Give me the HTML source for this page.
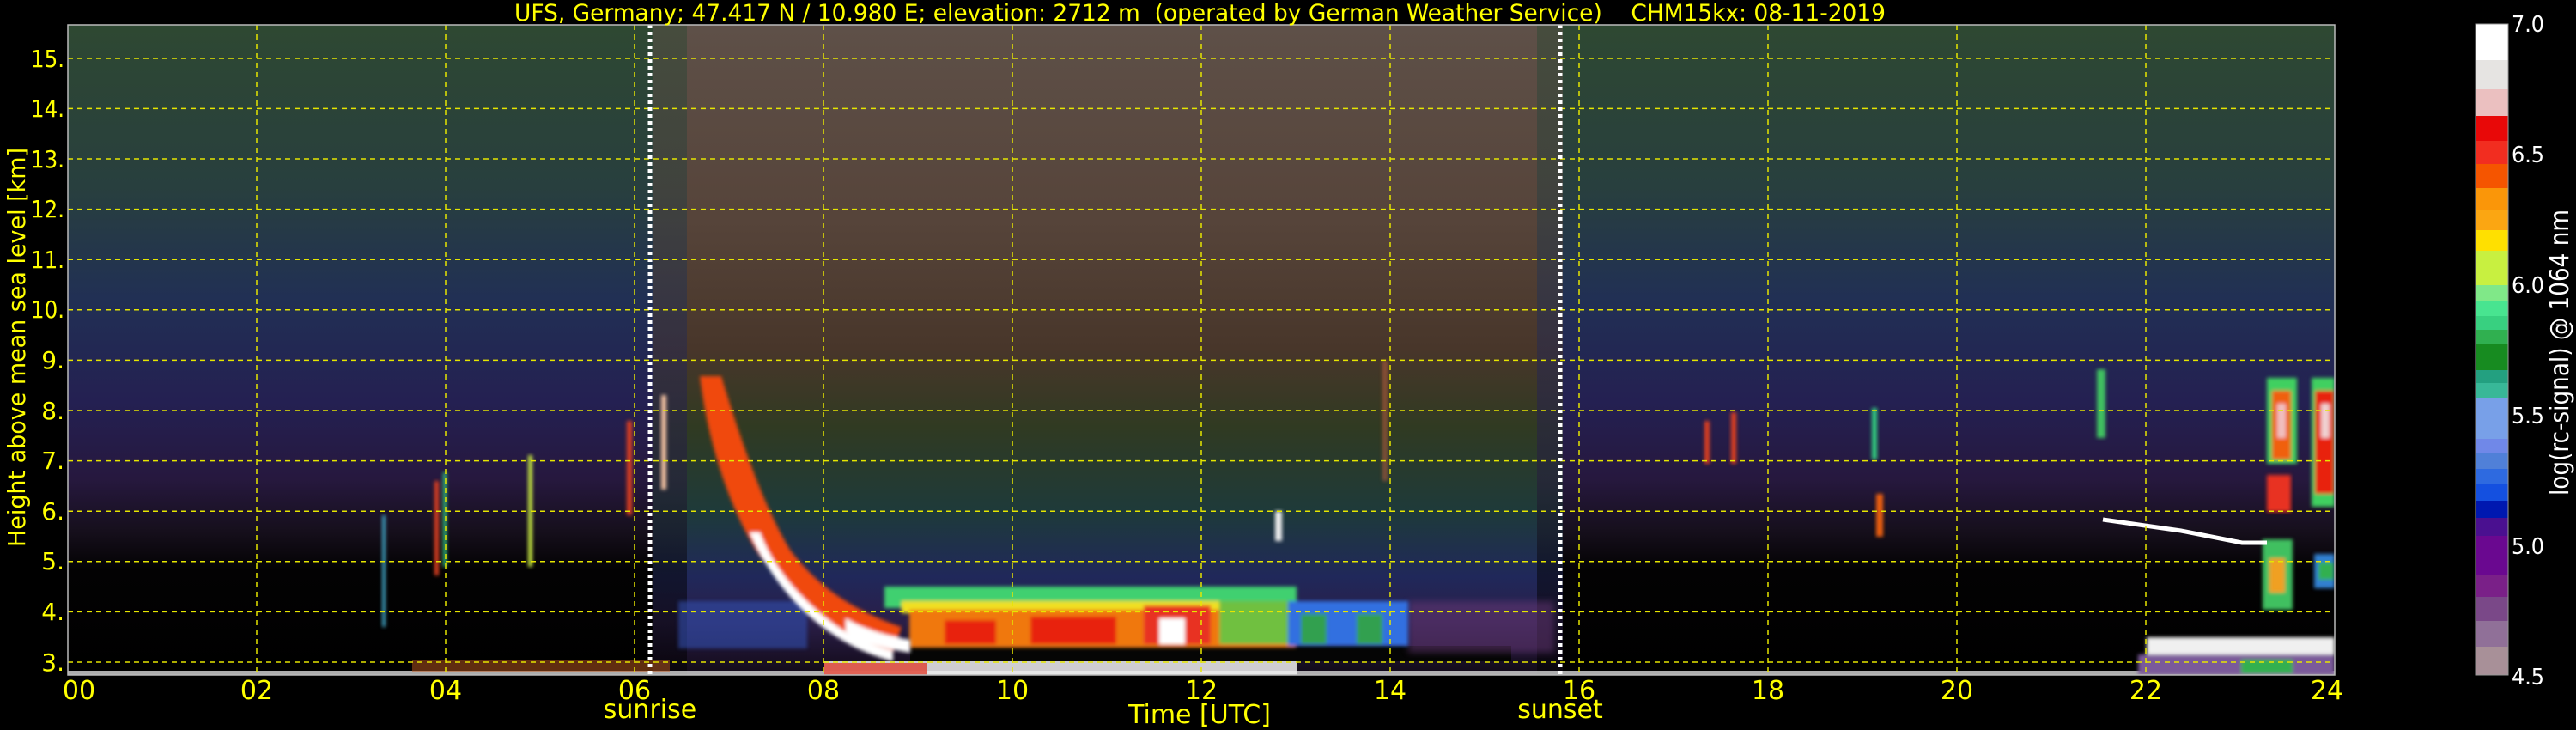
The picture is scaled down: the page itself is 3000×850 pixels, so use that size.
<!DOCTYPE html>
<html><head><meta charset="utf-8"><style>
html,body{margin:0;padding:0;background:#000;}
svg{display:block}
text{font-family:"DejaVu Sans","Liberation Sans",sans-serif;}
</style></head><body>
<svg width="3000" height="850" viewBox="0 0 3000 850" xmlns="http://www.w3.org/2000/svg">
<defs>
<linearGradient id="night" x1="0" y1="29" x2="0" y2="785" gradientUnits="userSpaceOnUse">
<stop offset="0" stop-color="#2e4832"/>
<stop offset="0.25" stop-color="#283f3e"/>
<stop offset="0.42" stop-color="#213054"/>
<stop offset="0.58" stop-color="#242052"/>
<stop offset="0.7" stop-color="#26183e"/>
<stop offset="0.78" stop-color="#160f1c"/>
<stop offset="0.84" stop-color="#030203"/>
<stop offset="1" stop-color="#000"/>
</linearGradient>
<linearGradient id="day" x1="0" y1="29" x2="0" y2="785" gradientUnits="userSpaceOnUse">
<stop offset="0" stop-color="#5e5048"/>
<stop offset="0.3" stop-color="#56443a"/>
<stop offset="0.5" stop-color="#48362a"/>
<stop offset="0.62" stop-color="#303a22"/>
<stop offset="0.75" stop-color="#1e3a3a"/>
<stop offset="0.85" stop-color="#20285a"/>
<stop offset="0.92" stop-color="#2a1e48"/>
<stop offset="1" stop-color="#120a18"/>
</linearGradient>
<filter id="blur"><feGaussianBlur stdDeviation="4"/></filter>
<filter id="blur2"><feGaussianBlur stdDeviation="2"/></filter>
<clipPath id="plot"><rect x="79" y="29" width="2640" height="757"/></clipPath>
</defs>

<g clip-path="url(#plot)">
<rect x="79" y="29" width="2640" height="757" fill="url(#night)"/>
<rect x="800" y="29" width="990" height="757" fill="url(#day)"/>
<rect x="760" y="29" width="40" height="757" fill="url(#day)" opacity="0.5"/>
<rect x="1790" y="29" width="30" height="757" fill="url(#day)" opacity="0.5"/>
<rect x="1060" y="752" width="700" height="18" fill="#050505"/>
<rect x="1640" y="700" width="170" height="60" fill="#6a3a7a" opacity="0.5" filter="url(#blur)"/>
<rect x="790" y="700" width="150" height="55" fill="#3050b0" opacity="0.6" filter="url(#blur2)"/>
<g filter="url(#blur2)">
<rect x="1030" y="683" width="480" height="25" fill="#40d070"/>
<rect x="1050" y="700" width="460" height="14" fill="#f0e020"/>
<rect x="1059" y="710" width="450" height="44" fill="#f07810"/>
<rect x="1100" y="722" width="60" height="28" fill="#e82010"/>
<rect x="1200" y="718" width="100" height="32" fill="#e82010"/>
<rect x="1332" y="705" width="78" height="45" fill="#e83020"/>
<rect x="1350" y="720" width="30" height="30" fill="#ffffff"/>
<rect x="1420" y="700" width="80" height="50" fill="#70c040"/>
<rect x="1500" y="700" width="140" height="52" fill="#3070e0"/>
<rect x="1515" y="715" width="30" height="35" fill="#30a050"/>
<rect x="1580" y="715" width="30" height="35" fill="#30a050"/>
</g>
<g filter="url(#blur2)">
<path d="M815,438 C825,520 850,590 880,640 C920,700 970,735 1040,760 L1050,730 C990,710 950,680 920,640 C890,590 865,520 840,438 Z" fill="#f04a10"/>
<path d="M873,620 C895,670 930,715 980,745 C1000,757 1020,765 1040,770 L1040,758 C1010,750 985,738 965,722 C930,695 900,660 885,620 Z" fill="#ffffff"/>
<path d="M985,720 C1000,730 1030,740 1060,745 L1060,760 C1030,755 1000,748 985,735Z" fill="#ffffff"/>
</g>
<rect x="79" y="781" width="2640" height="5" fill="#d8d8d8" opacity="0.8"/>
<rect x="960" y="770" width="550" height="16" fill="#f0f0f0" opacity="0.85"/>
<rect x="960" y="772" width="120" height="14" fill="#e04030" opacity="0.8"/>
<rect x="480" y="768" width="300" height="14" fill="#c05a20" opacity="0.5"/>
<g filter="url(#blur2)">
<rect x="506" y="560" width="5" height="110" fill="#e04020"/>
<rect x="516" y="550" width="4" height="110" fill="#30c080"/>
<rect x="615" y="530" width="5" height="130" fill="#c0e040"/>
<rect x="445" y="600" width="4" height="130" fill="#40a0c0"/>
<rect x="730" y="490" width="6" height="110" fill="#e04020"/>
<rect x="770" y="460" width="6" height="110" fill="#f0c0a0"/>
<rect x="1985" y="490" width="6" height="50" fill="#e04020"/>
<rect x="2016" y="480" width="6" height="60" fill="#e04020"/>
<rect x="2180" y="475" width="6" height="60" fill="#30d080"/>
<rect x="2185" y="575" width="8" height="50" fill="#f06010"/>
<rect x="2442" y="430" width="10" height="80" fill="#40c060"/>
<rect x="1485" y="595" width="8" height="35" fill="#f0f0f0"/>
<rect x="1610" y="420" width="6" height="140" fill="#c06040" opacity="0.6"/>
<rect x="2640" y="440" width="35" height="100" fill="#40d060"/>
<rect x="2646" y="455" width="22" height="80" fill="#f06010"/>
<rect x="2652" y="470" width="10" height="40" fill="#f0c0c0"/>
<rect x="2692" y="440" width="27" height="150" fill="#40d060"/>
<rect x="2696" y="455" width="22" height="120" fill="#e82010"/>
<rect x="2703" y="470" width="10" height="40" fill="#f0d0d0"/>
<rect x="2640" y="553" width="28" height="43" fill="#e83020"/>
<rect x="2635" y="628" width="35" height="82" fill="#40c060"/>
<rect x="2643" y="650" width="18" height="40" fill="#f0a020"/>
<rect x="2695" y="645" width="24" height="40" fill="#3080d0"/>
<rect x="2700" y="655" width="18" height="20" fill="#30b050"/>
</g>
<path d="M2449,605 L2540,618 L2611,632 L2640,632" stroke="#fff" stroke-width="5" fill="none"/>
<g filter="url(#blur2)">
<rect x="2500" y="742" width="219" height="30" fill="#f0f0f0"/>
<rect x="2490" y="762" width="229" height="24" fill="#7a5a9a"/>
<rect x="2610" y="768" width="60" height="16" fill="#30b050"/>
</g>
</g>

<g stroke="#e6e600" stroke-width="1.5" stroke-dasharray="6,5" fill="none">
<line x1="79" x2="2719" y1="68" y2="68"/><line x1="79" x2="2719" y1="126.4" y2="126.4"/>
<line x1="79" x2="2719" y1="185" y2="185"/><line x1="79" x2="2719" y1="243.6" y2="243.6"/>
<line x1="79" x2="2719" y1="302.2" y2="302.2"/><line x1="79" x2="2719" y1="360.8" y2="360.8"/>
<line x1="79" x2="2719" y1="419.4" y2="419.4"/><line x1="79" x2="2719" y1="478" y2="478"/>
<line x1="79" x2="2719" y1="536.6" y2="536.6"/><line x1="79" x2="2719" y1="595.2" y2="595.2"/>
<line x1="79" x2="2719" y1="653.8" y2="653.8"/><line x1="79" x2="2719" y1="712.4" y2="712.4"/>
<line x1="79" x2="2719" y1="771" y2="771"/>
<line x1="299" x2="299" y1="29" y2="786"/><line x1="519" x2="519" y1="29" y2="786"/>
<line x1="739" x2="739" y1="29" y2="786"/><line x1="959" x2="959" y1="29" y2="786"/>
<line x1="1179" x2="1179" y1="29" y2="786"/><line x1="1399" x2="1399" y1="29" y2="786"/>
<line x1="1619" x2="1619" y1="29" y2="786"/><line x1="1839" x2="1839" y1="29" y2="786"/>
<line x1="2059" x2="2059" y1="29" y2="786"/><line x1="2279" x2="2279" y1="29" y2="786"/>
<line x1="2499" x2="2499" y1="29" y2="786"/>
</g>
<g stroke="#fff" stroke-width="5" stroke-dasharray="4,4">
<line x1="757" x2="757" y1="29" y2="786"/><line x1="1817" x2="1817" y1="29" y2="786"/>
</g>
<rect x="79" y="29" width="2640" height="757" fill="none" stroke="#bbb" stroke-width="1.5"/>

<text x="599" y="24" fill="#ffff00" font-size="27" textLength="1597" lengthAdjust="spacingAndGlyphs" style="white-space:pre">UFS, Germany; 47.417 N / 10.980 E; elevation: 2712 m  (operated by German Weather Service)    CHM15kx: 08-11-2019</text>

<g fill="#ffff00" font-size="28" text-anchor="end">
<text x="75" y="78" textLength="39" lengthAdjust="spacingAndGlyphs">15.</text><text x="75" y="136" textLength="39" lengthAdjust="spacingAndGlyphs">14.</text><text x="75" y="195" textLength="39" lengthAdjust="spacingAndGlyphs">13.</text>
<text x="75" y="253" textLength="39" lengthAdjust="spacingAndGlyphs">12.</text><text x="75" y="312" textLength="39" lengthAdjust="spacingAndGlyphs">11.</text><text x="75" y="370" textLength="39" lengthAdjust="spacingAndGlyphs">10.</text>
<text x="75" y="429">9.</text><text x="75" y="488">8.</text><text x="75" y="546">7.</text>
<text x="75" y="605">6.</text><text x="75" y="663">5.</text><text x="75" y="722">4.</text>
<text x="75" y="781">3.</text>
</g>
<text transform="translate(29,637) rotate(-90)" fill="#ffff00" font-size="28" textLength="465" lengthAdjust="spacingAndGlyphs">Height above mean sea level [km]</text>

<g fill="#ffff00" font-size="30" text-anchor="middle">
<text x="92" y="814">00</text><text x="299" y="814">02</text><text x="519" y="814">04</text>
<text x="739" y="814">06</text><text x="959" y="814">08</text><text x="1179" y="814">10</text>
<text x="1399" y="814">12</text><text x="1619" y="814">14</text><text x="1839" y="814">16</text>
<text x="2059" y="814">18</text><text x="2279" y="814">20</text><text x="2499" y="814">22</text>
<text x="2710" y="814">24</text>
<text x="757" y="836">sunrise</text><text x="1817" y="836">sunset</text>
<text x="1397" y="842">Time [UTC]</text>
</g>

<g>
<rect x="2883" y="28" width="38" height="42" fill="#ffffff"/>
<rect x="2883" y="70" width="38" height="34" fill="#e6e4e2"/>
<rect x="2883" y="104" width="38" height="31" fill="#ebc0c0"/>
<rect x="2883" y="135" width="38" height="29" fill="#e80808"/>
<rect x="2883" y="164" width="38" height="27" fill="#f22d20"/>
<rect x="2883" y="191" width="38" height="28" fill="#f55500"/>
<rect x="2883" y="219" width="38" height="26" fill="#fa9609"/>
<rect x="2883" y="245" width="38" height="23" fill="#fba612"/>
<rect x="2883" y="268" width="38" height="24" fill="#ffe000"/>
<rect x="2883" y="292" width="38" height="40" fill="#c8f040"/>
<rect x="2883" y="332" width="38" height="18" fill="#80e888"/>
<rect x="2883" y="350" width="38" height="18" fill="#48e490"/>
<rect x="2883" y="368" width="38" height="16" fill="#38d080"/>
<rect x="2883" y="384" width="38" height="16" fill="#30b050"/>
<rect x="2883" y="400" width="38" height="31" fill="#178b20"/>
<rect x="2883" y="431" width="38" height="15" fill="#23a080"/>
<rect x="2883" y="446" width="38" height="17" fill="#38b898"/>
<rect x="2883" y="463" width="38" height="48" fill="#78a0e8"/>
<rect x="2883" y="511" width="38" height="17" fill="#7088e8"/>
<rect x="2883" y="528" width="38" height="18" fill="#5080d8"/>
<rect x="2883" y="546" width="38" height="17" fill="#2e6ae0"/>
<rect x="2883" y="563" width="38" height="20" fill="#1450e0"/>
<rect x="2883" y="583" width="38" height="20" fill="#0018b0"/>
<rect x="2883" y="603" width="38" height="21" fill="#4a1090"/>
<rect x="2883" y="624" width="38" height="46" fill="#6a0890"/>
<rect x="2883" y="670" width="38" height="25" fill="#7a2088"/>
<rect x="2883" y="695" width="38" height="28" fill="#7a4888"/>
<rect x="2883" y="723" width="38" height="30" fill="#907098"/>
<rect x="2883" y="753" width="38" height="33" fill="#a89098"/>
<rect x="2883" y="28" width="38" height="758" fill="none" stroke="#999" stroke-width="1"/>
</g>
<g fill="#fff" font-size="26">
<text x="2925" y="37" textLength="38" lengthAdjust="spacingAndGlyphs">7.0</text>
<text x="2925" y="189" textLength="38" lengthAdjust="spacingAndGlyphs">6.5</text>
<text x="2925" y="341" textLength="38" lengthAdjust="spacingAndGlyphs">6.0</text>
<text x="2925" y="493" textLength="38" lengthAdjust="spacingAndGlyphs">5.5</text>
<text x="2925" y="645" textLength="38" lengthAdjust="spacingAndGlyphs">5.0</text>
<text x="2925" y="797" textLength="38" lengthAdjust="spacingAndGlyphs">4.5</text>
</g>
<text transform="translate(2991,577) rotate(-90)" fill="#fff" font-size="30" textLength="333" lengthAdjust="spacingAndGlyphs">log(rc-signal) @ 1064 nm</text>
</svg>
</body></html>
